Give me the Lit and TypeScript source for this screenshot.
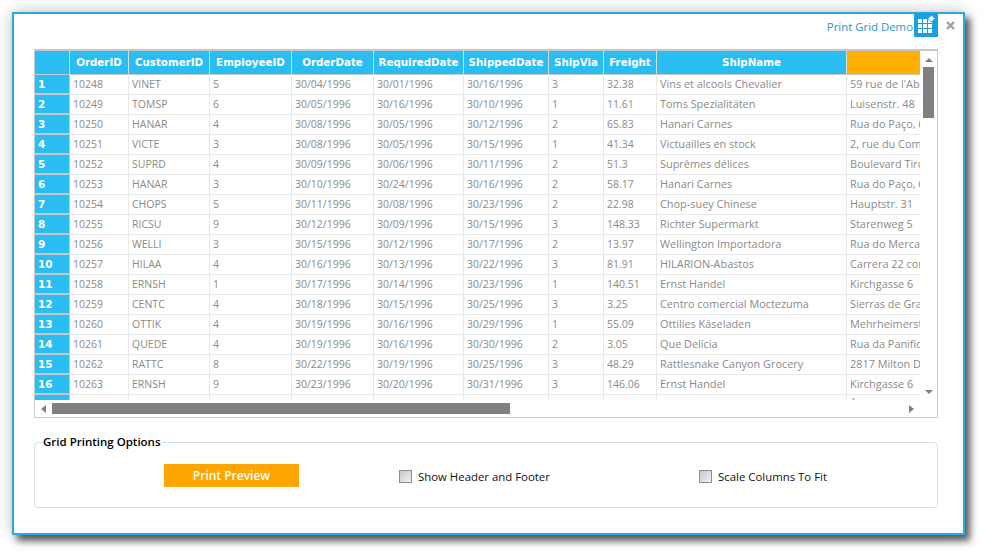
import { LitElement, html, css, svg } from 'lit';
import { customElement } from 'lit/decorators.js';

const COLUMNS = [
  { title: 'OrderID', width: 59 },
  { title: 'CustomerID', width: 81 },
  { title: 'EmployeeID', width: 82 },
  { title: 'OrderDate', width: 82 },
  { title: 'RequiredDate', width: 90 },
  { title: 'ShippedDate', width: 85 },
  { title: 'ShipVia', width: 55 },
  { title: 'Freight', width: 53 },
  { title: 'ShipName', width: 190, wide: true },
  { title: '', width: 300, wide: true },
];

const ROWS = [
  ['10248', 'VINET', '5', '30/04/1996', '30/01/1996', '30/16/1996', '3', '32.38', 'Vins et alcools Chevalier', "59 rue de l'Abbaye"],
  ['10249', 'TOMSP', '6', '30/05/1996', '30/16/1996', '30/10/1996', '1', '11.61', 'Toms Spezialitäten', 'Luisenstr. 48'],
  ['10250', 'HANAR', '4', '30/08/1996', '30/05/1996', '30/12/1996', '2', '65.83', 'Hanari Carnes', 'Rua do Paço, 67'],
  ['10251', 'VICTE', '3', '30/08/1996', '30/05/1996', '30/15/1996', '1', '41.34', 'Victuailles en stock', '2, rue du Commerce'],
  ['10252', 'SUPRD', '4', '30/09/1996', '30/06/1996', '30/11/1996', '2', '51.3', 'Suprêmes délices', 'Boulevard Tirou, 255'],
  ['10253', 'HANAR', '3', '30/10/1996', '30/24/1996', '30/16/1996', '2', '58.17', 'Hanari Carnes', 'Rua do Paço, 67'],
  ['10254', 'CHOPS', '5', '30/11/1996', '30/08/1996', '30/23/1996', '2', '22.98', 'Chop-suey Chinese', 'Hauptstr. 31'],
  ['10255', 'RICSU', '9', '30/12/1996', '30/09/1996', '30/15/1996', '3', '148.33', 'Richter Supermarkt', 'Starenweg 5'],
  ['10256', 'WELLI', '3', '30/15/1996', '30/12/1996', '30/17/1996', '2', '13.97', 'Wellington Importadora', 'Rua do Mercado, 12'],
  ['10257', 'HILAA', '4', '30/16/1996', '30/13/1996', '30/22/1996', '3', '81.91', 'HILARION-Abastos', 'Carrera 22 con Ave. Carlos'],
  ['10258', 'ERNSH', '1', '30/17/1996', '30/14/1996', '30/23/1996', '1', '140.51', 'Ernst Handel', 'Kirchgasse 6'],
  ['10259', 'CENTC', '4', '30/18/1996', '30/15/1996', '30/25/1996', '3', '3.25', 'Centro comercial Moctezuma', 'Sierras de Granada 9993'],
  ['10260', 'OTTIK', '4', '30/19/1996', '30/16/1996', '30/29/1996', '1', '55.09', 'Ottilies Käseladen', 'Mehrheimerstr. 369'],
  ['10261', 'QUEDE', '4', '30/19/1996', '30/16/1996', '30/30/1996', '2', '3.05', 'Que Delícia', 'Rua da Panificadora, 12'],
  ['10262', 'RATTC', '8', '30/22/1996', '30/19/1996', '30/25/1996', '3', '48.29', 'Rattlesnake Canyon Grocery', '2817 Milton Dr.'],
  ['10263', 'ERNSH', '9', '30/23/1996', '30/20/1996', '30/31/1996', '3', '146.06', 'Ernst Handel', 'Kirchgasse 6'],
  ['10264', 'FOLKO', '6', '30/24/1996', '30/21/1996', '30/23/1996', '3', '3.67', 'Folk och fä HB', 'Åkergatan 24'],
];

const gridIcon = svg`
  <svg width="24" height="24" viewBox="0 0 24 24" style="display: block">
    <path fill="#fff" d="M4 6h4v4H4z M9 6h4v4H9z M14 6h4v4h-4z M4 11h4v4H4z M9 11h4v4H9z M14 11h4v4h-4z M4 16h4v4H4z M9 16h4v4H9z M14 16h4v4h-4z"/>
    <path fill="#fff" stroke="#1b9fe0" d="M17.500 2l3.500 3.500-3.500 3.500-3.500-3.500z"/>
  </svg>`;

const closeIcon = svg`
  <svg width="9" height="9" viewBox="0 0 9 9" style="display: block">
    <path d="M1 1l7 7 M8 1l-7 7" stroke="#a0a0a0" stroke-width="2.400" fill="none"/>
  </svg>`;

@customElement('app-root')
export class AppRoot extends LitElement {
  static styles = css`
    :host {
      display: block;
      width: 986px;
      height: 557px;
      padding: 12px 21px 22px 12px;
      box-sizing: border-box;
      background: #fff;
      font-family: 'Open Sans', sans-serif;
      overflow: hidden;
    }

    .window {
      height: 100%;
      box-sizing: border-box;
      padding: 0 25px 0 20px;
      background: #fff;
      border: 2px solid #29a8e2;
      box-shadow: 5px 6px 7px rgba(0, 0, 0, 0.6), 0 0 14px rgba(0, 0, 0, 0.25);
      display: flex;
      flex-direction: column;
    }

    .titlebar {
      height: 35px;
      display: flex;
      justify-content: flex-end;
      position: relative;
    }

    .title {
      margin-top: 5px;
      font-size: 11.4px;
      line-height: 16px;
      color: #1f96dc;
    }

    .title-icon {
      width: 24px;
      height: 24px;
      margin-left: 1px;
      margin-top: -1px;
      background: #1b9fe0;
    }

    .close {
      position: absolute;
      right: -17px;
      top: 7px;
    }

    .frame {
      height: 369px;
      box-sizing: border-box;
      border: 1px solid #c8c8c8;
      border-top-width: 2px;
      display: grid;
      grid-template-columns: 1fr 17px;
      grid-template-rows: 349px 1fr;
    }

    .viewport {
      overflow: hidden;
    }

    table {
      border-collapse: separate;
      border-spacing: 0;
      table-layout: fixed;
      width: 1112px;
      font-size: 10.5px;
    }

    th {
      height: 24px;
      padding: 0 0 2px;
      box-sizing: border-box;
      background: #29bdf2;
      color: #fff;
      font: bold 10.3px 'DejaVu Sans', sans-serif;
      text-align: center;
      border-right: 1px solid #d4dde0;
      border-bottom: 1px solid #c8c8c8;
    }

    th.active {
      background: #ffb000;
    }

    td {
      height: 20px;
      padding: 0 0 2px 3px;
      box-sizing: border-box;
      color: #8a8a8a;
      white-space: nowrap;
      overflow: hidden;
      border-right: 1px solid #e8e8e8;
      border-bottom: 1px solid #e8e8e8;
    }

    td.wide {
      font-size: 10.9px;
    }

    td.num {
      padding-bottom: 0;
      background: #29bdf2;
      color: #fff;
      font: bold 10.500px 'DejaVu Sans', sans-serif;
      border-right: 1px solid #c8c8c8;
      border-bottom: 2px solid #c8c8c8;
    }

    .vbar,
    .hbar {
      display: flex;
      align-items: center;
    }

    .vbar {
      flex-direction: column;
      grid-row: 1 / 3;
      grid-column: 2;
      padding: 7px 0 23px;
    }

    .thumb {
      background: #808080;
    }

    .vbar .thumb {
      width: 11px;
      height: 51px;
      margin-top: 5px;
    }

    .fill {
      flex: 1;
    }

    .hbar {
      padding: 0 6px;
    }

    .hbar .thumb {
      width: 458px;
      height: 11px;
      margin-left: 6px;
    }

    .arrow-up,
    .arrow-down {
      width: 0;
      height: 0;
      border-left: 4px solid transparent;
      border-right: 4px solid transparent;
    }

    .arrow-up {
      border-bottom: 4px solid #808080;
    }

    .arrow-down {
      border-top: 4px solid #808080;
    }

    .arrow-left,
    .arrow-right {
      width: 0;
      height: 0;
      border-top: 4px solid transparent;
      border-bottom: 4px solid transparent;
    }

    .arrow-left {
      border-right: 5px solid #808080;
    }

    .arrow-right {
      border-left: 5px solid #808080;
    }

    .options {
      margin: 17px 0 0;
      padding: 15px 0 0;
      height: 73px;
      box-sizing: border-box;
      border: 1px solid #d5dfe6;
      border-radius: 4px;
    }

    .options-row {
      display: grid;
      grid-template-columns: 364px 300px 1fr;
      align-items: center;
    }

    legend {
      margin-left: 7px;
      padding: 0 1px;
      font-size: 11.5px;
      line-height: 14px;
      font-weight: 600;
      color: #000;
    }

    button {
      display: block;
      margin-left: 129px;
      width: 135px;
      height: 23px;
      padding: 0;
      border: none;
      background: #ffa500;
      color: #fff;
      font: 600 12px 'Open Sans', sans-serif;
    }

    .check {
      display: flex;
      align-items: center;
      gap: 6px;
      font-size: 11.4px;
      color: #111;
      padding-top: 2px;
    }

    .box {
      width: 11px;
      height: 11px;
      border: 1px solid #8e8e8e;
      background: linear-gradient(135deg, #c4c8cc, #f0f2f4);
    }
  `;

  render() {
    return html`
      <div class="window">
        <div class="titlebar">
          <span class="title">Print Grid Demo</span>
          <div class="title-icon">${gridIcon}</div>
          <span class="close">${closeIcon}</span>
        </div>
        <div class="frame">
          <div class="viewport">
            <table>
              <colgroup>
                <col style="width: 35px" />
                ${COLUMNS.map((c) => html`<col style="width: ${c.width}px" />`)}
              </colgroup>
              <thead>
                <tr>
                  <th></th>
                  ${COLUMNS.map((c) => html`<th class=${c.title ? '' : 'active'}>${c.title}</th>`)}
                </tr>
              </thead>
              <tbody>
                ${ROWS.map(
                  (row, i) => html`
                    <tr>
                      <td class="num">${i + 1}</td>
                      ${row.map((v, j) => html`<td class=${COLUMNS[j].wide ? 'wide' : ''}>${v}</td>`)}
                    </tr>
                  `
                )}
              </tbody>
            </table>
          </div>
          <div class="vbar">
            <div class="arrow-up"></div>
            <div class="thumb"></div>
            <div class="fill"></div>
            <div class="arrow-down"></div>
          </div>
          <div class="hbar">
            <div class="arrow-left"></div>
            <div class="thumb"></div>
            <div class="fill"></div>
            <div class="arrow-right"></div>
          </div>
        </div>
        <fieldset class="options">
          <legend>Grid Printing Options</legend>
          <div class="options-row">
            <div><button>Print Preview</button></div>
            <label class="check"><span class="box"></span>Show Header and Footer</label>
            <label class="check"><span class="box"></span>Scale Columns To Fit</label>
          </div>
        </fieldset>
      </div>
    `;
  }
}

declare global {
  interface HTMLElementTagNameMap {
    'app-root': AppRoot;
  }
}
